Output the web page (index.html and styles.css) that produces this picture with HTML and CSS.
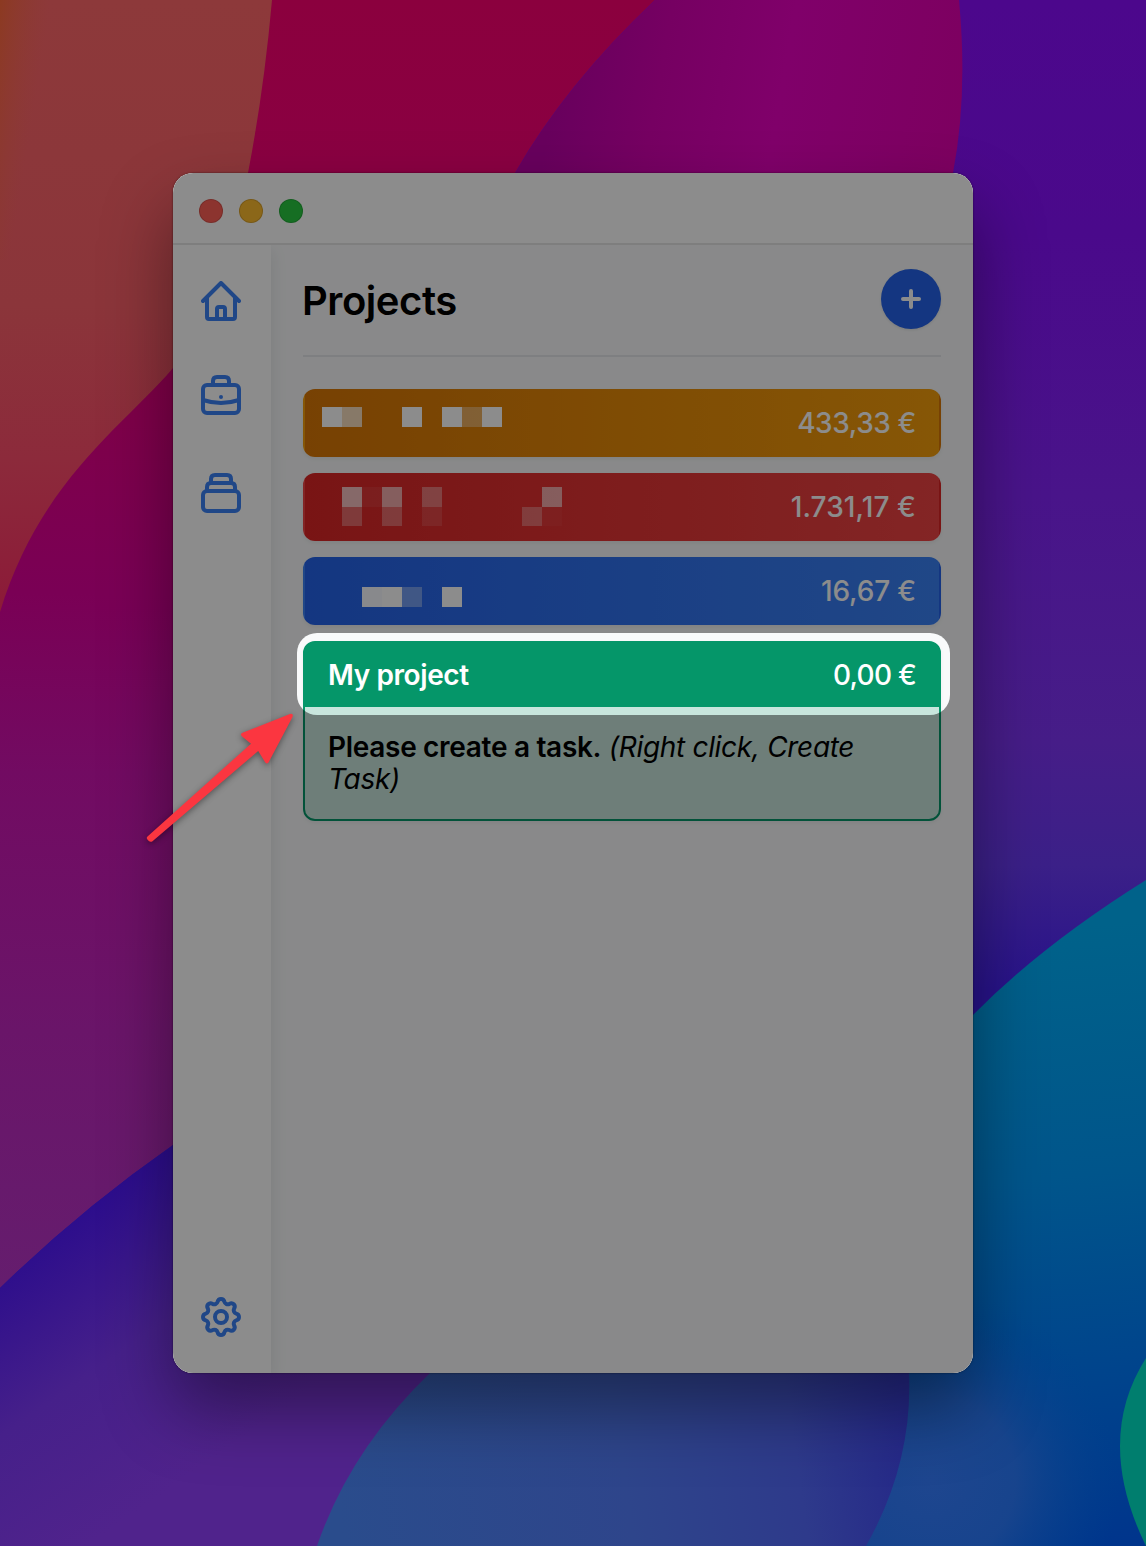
FILE: index.html
```html
<!DOCTYPE html>
<html lang="en">
<head>
<meta charset="utf-8">
<title>Projects</title>
<link rel="stylesheet" href="styles.css">
</head>
<body>
<div class="desktop">
  <svg class="wallpaper" viewBox="0 0 1146 1546" aria-hidden="true">
    <defs>
      <linearGradient id="violet" x1="0" y1="0" x2="0" y2="1"><stop offset="0" stop-color="#4c078c"/><stop offset=".15" stop-color="#4a098b"/><stop offset=".32" stop-color="#49148a"/><stop offset=".48" stop-color="#461d88"/><stop offset=".56" stop-color="#3b2088"/><stop offset=".64" stop-color="#28138a"/></linearGradient>
      <linearGradient id="coral" x1="0" y1="0" x2="0" y2="1"><stop offset="0" stop-color="#8d393a"/><stop offset=".5" stop-color="#8b353a"/><stop offset=".75" stop-color="#8c2a3b"/><stop offset="1" stop-color="#8c1a38"/></linearGradient>
      <linearGradient id="orange" gradientUnits="userSpaceOnUse" x1="0" y1="0" x2="50" y2="8"><stop offset="0" stop-color="#8c3a1e" stop-opacity=".9"/><stop offset="1" stop-color="#8c3a30" stop-opacity="0"/></linearGradient>
      <linearGradient id="crimson" x1="0" y1="0" x2="0" y2="1"><stop offset="0" stop-color="#8b003e"/><stop offset=".13" stop-color="#8a0042"/><stop offset=".3" stop-color="#800048"/><stop offset=".46" stop-color="#7a0055"/><stop offset=".6" stop-color="#720b62"/><stop offset=".8" stop-color="#6a1569"/><stop offset="1" stop-color="#651d6e"/></linearGradient>
      <linearGradient id="magenta" gradientUnits="userSpaceOnUse" x1="560" y1="60" x2="960" y2="130"><stop offset="0" stop-color="#68005d"/><stop offset=".25" stop-color="#760062"/><stop offset=".55" stop-color="#80006a"/><stop offset="1" stop-color="#7d0060"/></linearGradient>
      <linearGradient id="indigo" gradientUnits="userSpaceOnUse" x1="80" y1="1210" x2="240" y2="1440"><stop offset="0" stop-color="#2c0d8c"/><stop offset=".5" stop-color="#46208a"/><stop offset="1" stop-color="#50238c"/></linearGradient>
      <linearGradient id="steel" gradientUnits="userSpaceOnUse" x1="340" y1="1520" x2="910" y2="1440"><stop offset="0" stop-color="#2a4c8c"/><stop offset=".5" stop-color="#2e458b"/><stop offset=".8" stop-color="#2e3a8b"/><stop offset="1" stop-color="#252888"/></linearGradient>
      <linearGradient id="ocean" gradientUnits="userSpaceOnUse" x1="1040" y1="930" x2="1100" y2="1546"><stop offset="0" stop-color="#00628a"/><stop offset=".4" stop-color="#00558b"/><stop offset=".7" stop-color="#00458c"/><stop offset="1" stop-color="#00358c"/></linearGradient>
      <radialGradient id="haze" gradientUnits="userSpaceOnUse" cx="930" cy="1480" r="190"><stop offset="0" stop-color="#1e468f"/><stop offset=".45" stop-color="#1a458d" stop-opacity=".9"/><stop offset="1" stop-color="#00418c" stop-opacity="0"/></radialGradient>
    </defs>
    <rect width="1146" height="1546" fill="url(#violet)"/>
    <path fill="url(#crimson)" d="M0 0H655Q565 85 515 173L300 800 173 1145Q80 1210 0 1288Z"/>
    <path fill="url(#magenta)" d="M655 0H959Q968 95 953 173L900 400H400L515 173Q565 85 655 0Z"/>
    <path fill="url(#coral)" d="M0 0H272Q264 90 248 173C235 250 215 320 173 368C125 425 40 480 0 612Z"/>
    <path fill="url(#orange)" d="M0 0H60V260H0Z"/>
    <path fill="url(#indigo)" d="M0 1288Q80 1210 173 1145L600 1000V1546H0Z"/>
    <path fill="url(#ocean)" d="M1146 880Q1042 945 973 1015L800 1250V1546H1146Z"/>
    <path fill="url(#haze)" d="M740 1290H1146V1546H740Z"/>
    <path fill="url(#steel)" d="M317 1546Q350 1450 430 1373L500 1300H900L909 1373Q913 1463 866 1546Z"/>
    <path fill="#007e6e" d="M1146 1358Q1094 1440 1146 1546Z"/>
  </svg>

  <main class="window">
    <header class="titlebar">
      <span class="light light-close"></span>
      <span class="light light-minimize"></span>
      <span class="light light-zoom"></span>
    </header>
    <div class="body">
      <nav class="sidebar">
        <svg class="icon" viewBox="0 0 40 40"><path d="M2 20 20 2 38 20M6 17V36Q6 38 8 38H32Q34 38 34 36V17M16 38V28Q16 26 18 26H22Q24 26 24 28V38"/></svg>
        <svg class="icon icon-briefcase" viewBox="0 0 40 40"><rect x="2" y="10" width="36" height="28" rx="4"/><path d="M12 10V6Q12 2 16 2H24Q28 2 28 6V10M2 25Q20 31 38 25"/><circle class="dot" cx="20" cy="22" r="2"/></svg>
        <svg class="icon icon-stack" viewBox="0 0 40 40"><rect x="2" y="18" width="36" height="20" rx="4"/><path d="M6 18V14Q6 10 10 10H30Q34 10 34 14V18M10 10V6Q10 2 14 2H26Q30 2 30 6V10"/></svg>
        <svg class="icon icon-settings" viewBox="0 0 40 40"><circle cx="20" cy="20" r="6"/><path d="M16.6 4.8C17.5 1.1 22.5 1.1 23.4 4.8A3.5 3.5 0 0 0 28.4 6.9C31.7 4.9 35.1 8.3 33.1 11.6A3.5 3.5 0 0 0 35.2 16.6C38.9 17.5 38.9 22.5 35.2 23.4A3.5 3.5 0 0 0 33.1 28.4C35.1 31.7 31.7 35.1 28.4 33.1A3.5 3.5 0 0 0 23.4 35.2C22.5 38.9 17.5 38.9 16.6 35.2A3.5 3.5 0 0 0 11.6 33.1C8.3 35.1 4.9 31.7 6.9 28.4A3.5 3.5 0 0 0 4.8 23.4C1.1 22.5 1.1 17.5 4.8 16.6A3.5 3.5 0 0 0 6.9 11.6C4.9 8.3 8.3 4.9 11.6 6.9A3.5 3.5 0 0 0 16.6 4.8Z"/></svg>
      </nav>
      <section class="content">
        <div class="heading">
          <h1>Projects</h1>
          <button class="add" aria-label="Add project"><svg viewBox="0 0 20 20"><path d="M10 2V18M2 10H18"/></svg></button>
        </div>
        <div class="project amber">
          <div class="mosaic amber-name"><i style="opacity:1"></i><i style="opacity:.74"></i><i></i><i></i><i style="opacity:1"></i><i></i><i style="opacity:1"></i><i style="opacity:.36"></i><i style="opacity:1"></i></div>
          <span class="amount">433,33 €</span>
        </div>
        <div class="project red">
          <div class="mosaic red-name"><i style="opacity:.7"></i><i style="opacity:.07"></i><i style="opacity:.61"></i><i></i><i style="opacity:.36"></i><i></i><i></i><i></i><i></i><i></i><i style="opacity:.58"></i><i style="opacity:.31"></i><i></i><i style="opacity:.31"></i><i></i><i style="opacity:.12"></i><i></i><i></i><i></i><i></i><i style="opacity:.3"></i><i style="opacity:.04"></i></div>
          <span class="amount">1.731,17 €</span>
        </div>
        <div class="project blue">
          <div class="mosaic blue-name"><i style="opacity:.97"></i><i style="opacity:1"></i><i style="opacity:.36"></i><i></i><i style="opacity:1"></i></div>
          <span class="amount">16,67 €</span>
        </div>
        <article class="current">
          <div class="current-head"><span class="name">My project</span><span class="amount">0,00 €</span></div>
          <p class="hint"><b>Please create a task.</b> <em>(Right click, Create<br>Task)</em></p>
        </article>
      </section>
    </div>
    <div class="spotlight"></div>
  </main>

  <svg class="arrow" viewBox="0 0 160 150" aria-hidden="true"><path d="M7.500 136.500 111 43.700 101.800 36.200Q99.800 33.800 102.500 32.800L150 13.900Q153.800 13 152.500 17L128.500 62.500Q127 64.500 125.300 62.500L118.200 51 12.500 141.200Q10.500 142.500 8.800 141L7.200 139.200Q6.200 137.800 7.500 136.500Z"/></svg>
</div>
</body>
</html>
```
FILE: styles.css
```css
* { box-sizing: border-box; }
body { margin: 0; font-family: Inter, "Liberation Sans", sans-serif; color: #000; }
.desktop { position: relative; width: 1146px; height: 1546px; padding: 173px; overflow: hidden; }
.wallpaper { position: absolute; inset: 0; width: 1146px; height: 1546px; }
.window {
  position: relative; display: flex; flex-direction: column;
  width: 800px; height: 1200px; overflow: hidden;
  border-radius: 20px; background: #fff;
  box-shadow: 0 0 2px rgba(0,0,0,.6), 0 36px 70px rgba(0,0,0,.4);
}
.titlebar { position: relative; z-index: 1; display: flex; align-items: center; gap: 16px; height: 72px; padding: 6px 26px 0; background: #fff; border-bottom: 2px solid #e5e5e5; }
.light { width: 24px; height: 24px; border-radius: 50%; border: 1px solid rgba(0,0,0,.14); }
.light-close { background: #ff5f57; }
.light-minimize { background: #febc2e; }
.light-zoom { background: #28c840; }
.body { display: flex; flex: 1; }
.sidebar { display: flex; flex-direction: column; align-items: center; width: 98px; padding: 36px 2px 36px 0; z-index: 0; background: #fff; box-shadow: 0 6px 16px rgba(5,40,35,.1); }
.icon { width: 40px; height: 40px; fill: none; stroke: #3b82f6; stroke-width: 4; stroke-linecap: round; stroke-linejoin: round; }
.icon .dot { fill: #3b82f6; stroke: none; }
.icon-briefcase { margin-top: 54px; }
.icon-stack { margin-top: 58px; }
.icon-settings { margin-top: auto; }
.content { flex: 1; display: flex; flex-direction: column; gap: 16px; padding: 24px 32px; background: #f9fafb; }
.heading { display: flex; justify-content: space-between; height: 88px; margin-bottom: 16px; border-bottom: 2px solid #e5e7eb; }
h1 { margin: 0 0 0 -1px; font-size: 40px; line-height: 64px; font-weight: 600; letter-spacing: -.45px; }
.add { display: grid; place-items: center; width: 60px; height: 60px; padding: 0; border: 0; border-radius: 50%; background: #2563eb; box-shadow: 0 1px 3px rgba(0,0,0,.1); }
.add svg { width: 20px; height: 20px; fill: none; stroke: #fff; stroke-width: 4; stroke-linecap: round; }
.project { display: flex; justify-content: space-between; height: 68px; padding-right: 24px; border: 2px solid transparent; border-radius: 12px; box-shadow: 0 2px 4px rgba(0,0,0,.06); }
.amber { background: linear-gradient(to right, #d97706, #f59e0b); }
.red { background: linear-gradient(to right, #dc2626, #ef4444); }
.blue { background: linear-gradient(to right, #2563eb, #3b82f6); }
.mosaic { display: grid; grid-auto-rows: 20px; }
.mosaic i { background: #fff; opacity: 0; }
.amber-name { grid-template-columns: repeat(9, 20px); margin: 16px 0 0 17px; }
.red-name { grid-template-columns: repeat(11, 20px); grid-template-rows: 20px 19px; margin: 12px 0 0 37px; }
.blue-name { grid-template-columns: repeat(5, 20px); margin: 28px 0 0 57px; }
.amount { margin-right: -1px; color: #fff; font-size: 28px; line-height: 65px; font-weight: 500; }
.amber .amount { letter-spacing: -.4px; }
.red .amount { letter-spacing: .1px; }
.blue .amount { letter-spacing: -.15px; }
.current .amount { letter-spacing: -.75px; }
.current { height: 180px; border: 2px solid #059669; border-radius: 12px; background: rgba(5,150,105,.2); box-shadow: 0 2px 4px rgba(0,0,0,.05); }
.current-head { display: flex; justify-content: space-between; height: 64px; margin: -1px -1px 0; padding: 0 25px; height: 65px; background: #059669; border-radius: 11px 11px 0 0; }
.name { margin-left: -1px; color: #fff; font-size: 28px; line-height: 67px; font-weight: 600; letter-spacing: -.4px; }
.current .amount { line-height: 67px; }
.hint { margin: 0; padding: 24px 23px; font-size: 28px; line-height: 32px; letter-spacing: -.31px; white-space: nowrap; }
.hint b { font-weight: 600; }
.spotlight { position: absolute; z-index: 2; left: 123.700px; top: 459.700px; width: 653.300px; height: 82px; border-radius: 20px; box-shadow: 0 0 0 1400px rgba(0,0,0,.45); }
.arrow { position: absolute; z-index: 3; left: 140px; top: 700px; width: 160px; height: 150px; overflow: visible; fill: #fb3640; filter: drop-shadow(0 2px 3px rgba(0,0,0,.4)); }
```
